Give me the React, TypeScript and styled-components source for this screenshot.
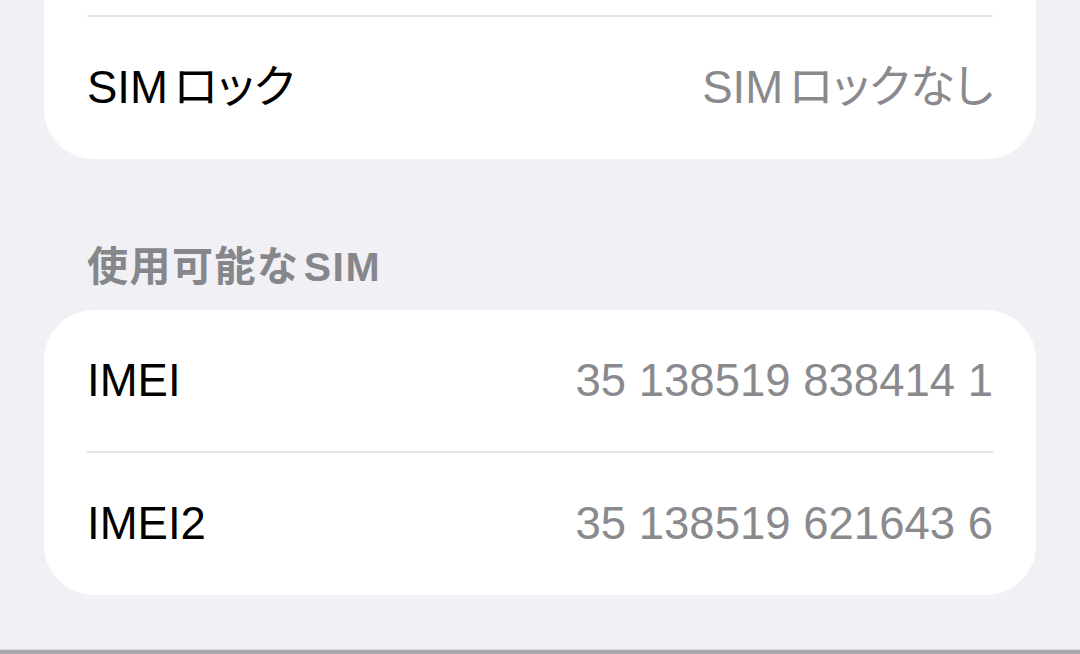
import React from "react";
import styled, { createGlobalStyle } from "styled-components";

interface IRow {
  label: string;
  value?: string;
  height?: number;
}

const GlobalStyle = createGlobalStyle`
  html, body {
    margin: 0;
    padding: 0;
    background: #f0f0f5;
    overflow: hidden;
  }
  body {
    font-family: "Liberation Sans", "Noto Sans CJK JP", sans-serif;
    font-feature-settings: "palt";
    text-autospace: normal;
    -webkit-font-smoothing: antialiased;
  }
`;

const Screen = styled.div`
  display: flex;
  flex-direction: column;
  height: 654px;
  overflow: hidden;
`;
const Content = styled.div`
  display: flex;
  flex-direction: column;
  padding: 0 44px;
`;
const Group = styled.div<{ $offset?: number }>`
  display: flex;
  flex-direction: column;
  background: #ffffff;
  border-radius: 50px;
  margin-top: ${(p) => (p.$offset ? `-${p.$offset}px` : "0")};
`;
const Row = styled.div<{ $height: number }>`
  display: flex;
  align-items: center;
  justify-content: space-between;
  height: ${(p) => p.$height}px;
  padding: 0 43px;
  font-size: 45.5px;
  line-height: 56px;
`;
const Label = styled.span`
  color: #000000;
`;
const Value = styled.span`
  color: #8a8a8e;
`;
const Divider = styled.div`
  height: 2px;
  margin: 0 43px;
  background: #e4e4e7;
`;
const SectionHeader = styled.div`
  margin: 84px 43px 19px;
  font-size: 41px;
  line-height: 48px;
  font-weight: 600;
  color: #86868b;
  letter-spacing: 1.5px;
`;
const HomeBar = styled.div`
  margin-top: auto;
  height: 4px;
  border-top: 1px solid #dcdce0;
  background: #a9a9ac;
`;

const SettingRow: React.FC<IRow> = ({ label, value, height = 141 }) => (
  <Row $height={height}>
    <Label>{label}</Label>
    {value && <Value>{value}</Value>}
  </Row>
);

const App: React.FC = () => {
  return (
    <>
      <GlobalStyle />
      <Screen>
        <Content>
          <Group $offset={127}>
            <SettingRow label="" height={142} />
            <Divider />
            <SettingRow label="SIMロック" value="SIMロックなし" height={142} />
          </Group>
          <SectionHeader>使用可能なSIM</SectionHeader>
          <Group>
            <SettingRow label="IMEI" value="35 138519 838414 1" />
            <Divider />
            <SettingRow label="IMEI2" value="35 138519 621643 6" height={142} />
          </Group>
        </Content>
        <HomeBar />
      </Screen>
    </>
  );
};

export default App;
